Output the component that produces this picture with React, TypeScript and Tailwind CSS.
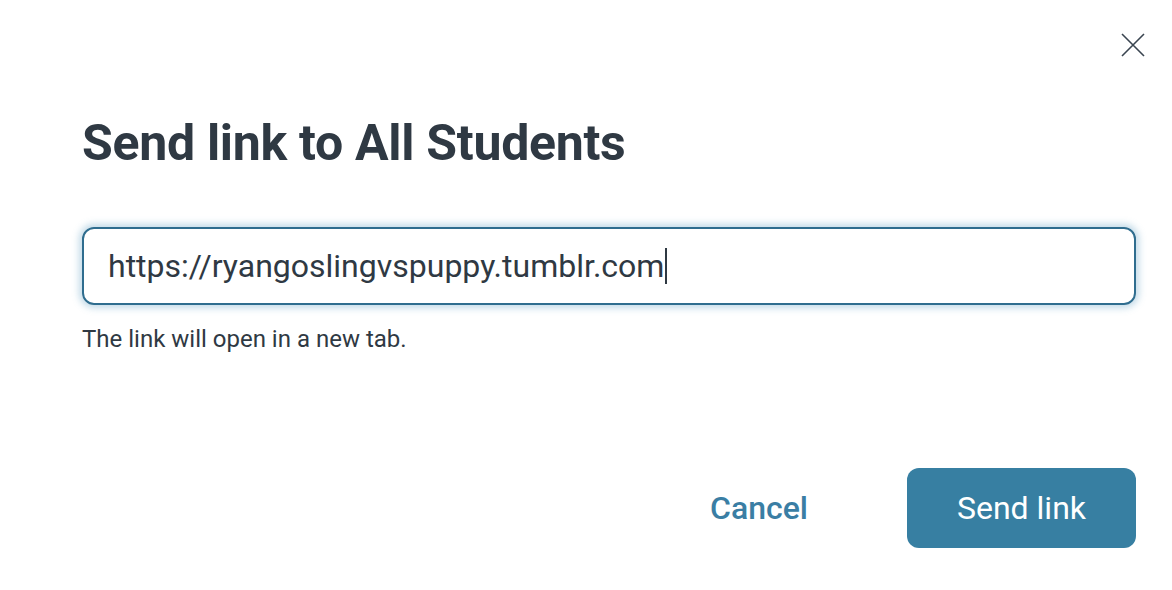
export default function App() {
  return (
    <div
      className="relative w-[1172px] h-[590px] bg-white overflow-hidden"
      style={{ fontFamily: "Roboto, 'Liberation Sans', sans-serif" }}
    >
      {/* Close */}
      <button className="absolute right-[27px] top-[33px] w-[24px] h-[24px] text-[#3a4550]">
        <svg viewBox="0 0 24 24" width="24" height="24" fill="none" stroke="currentColor" strokeWidth="1.6">
          <path d="M1 1 L23 23 M23 1 L1 23" />
        </svg>
      </button>

      <div className="pt-[110px] pl-[82px] pr-[36px] flex flex-col">
        <h1 className="text-[50px] leading-[66px] font-bold text-[#2f3943] tracking-[-0.3px]">
          Send link to All Students
        </h1>

        <div className="mt-[51px] h-[78px] rounded-[12px] border-2 border-[#2f6d8f] shadow-[0_0_7px_3px_rgba(80,150,190,0.35)] flex items-center pl-[24px]">
          <span className="text-[32px] text-[#2f3943]">https://ryangoslingvspuppy.tumblr.com</span>
          <span className="w-[2px] h-[36px] bg-[#2f3943] ml-[1px]" />
        </div>

        <p className="mt-[18px] text-[24px] leading-[32px] text-[#2f3943]">The link will open in a new tab.</p>

        <div className="mt-[113px] flex items-center justify-end">
          <button className="text-[32px] font-medium text-[#3a7ea4] mr-[99px]">Cancel</button>
          <button className="w-[229px] h-[80px] rounded-[12px] bg-[#377fa2] text-white text-[32px]">Send link</button>
        </div>
      </div>
    </div>
  );
}
